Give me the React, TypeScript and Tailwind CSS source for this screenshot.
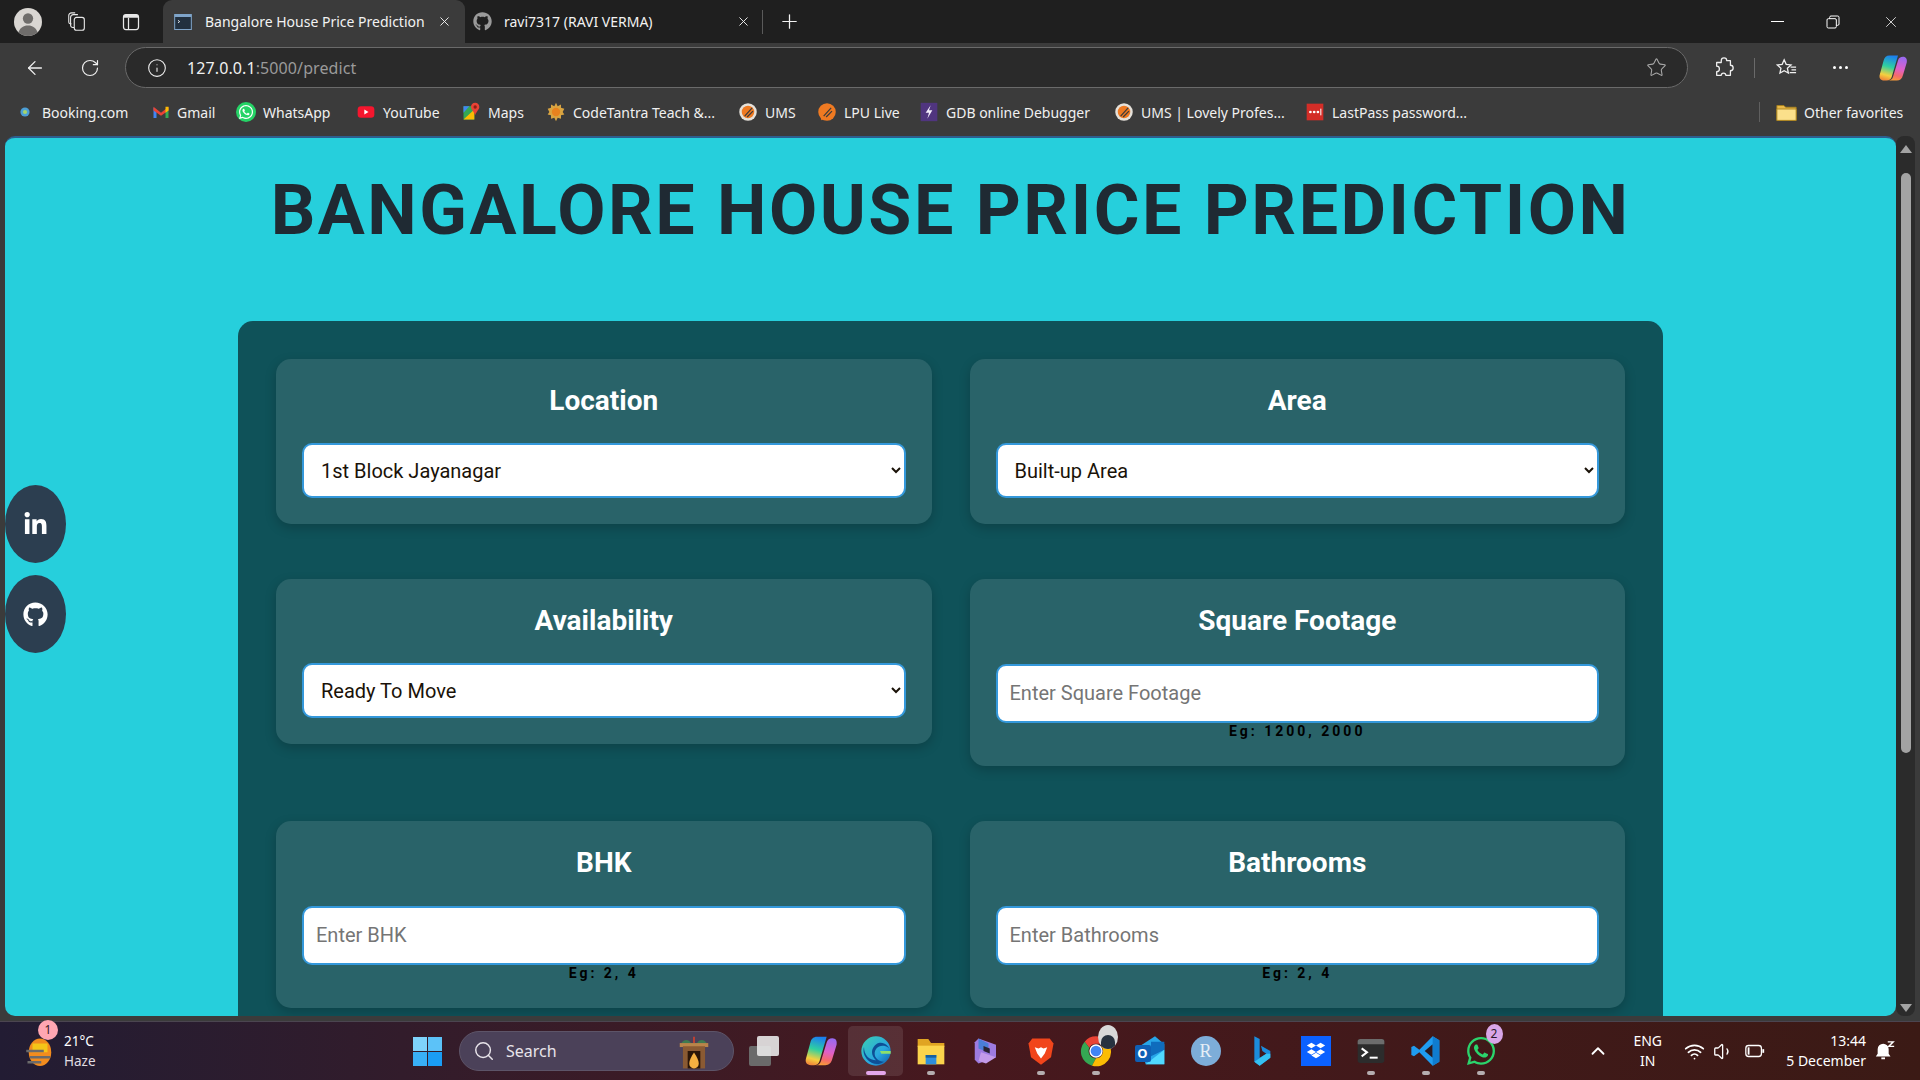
import { ArrowLeft, ChevronUp, Info, Plus, RotateCw, Search, Star, Volume1, Wifi, X } from "lucide-react";
import { FaGithub, FaLinkedinIn, FaWhatsapp } from "react-icons/fa";

const uiFont = "font-['Noto_Sans','Open_Sans',sans-serif]";

function Svg({ s = 18, vb = "0 0 24 24", children }: { s?: number; vb?: string; children: React.ReactNode }) {
  return (
    <svg width={s} height={s} viewBox={vb} className="shrink-0" aria-hidden="true">
      {children}
    </svg>
  );
}

function LpuIcon({ bubble }: { bubble?: boolean }) {
  return (
    <Svg s={20}>
      <circle cx="12" cy="12" r="10.5" fill={bubble ? "#ef7a22" : "#e5e1da"} />
      <circle cx="12" cy="12" r="7.5" fill="#ef7a22" />
      <path d="M8 17 17 7M11 18l7-7" stroke="#3b3b3b" strokeWidth="1.5" />
      {bubble && <path d="M5 17v5l5-2z" fill="#ef7a22" />}
    </Svg>
  );
}

function CopilotIcon({ s }: { s: number }) {
  return (
    <Svg s={s}>
      <path d="M9 2h7l-5 17c-.5 2-2 3-4 3H5c-3 0-4.500-2-3.500-5l3-11C5 3.500 7 2 9 2z" fill="url(#cp1)" />
      <path d="M15 22H8c2 0 3.500-1 4-3l4-13c.5-2 2-3 4-3 2.500 0 3.500 2 3 4.500l-3 10c-.7 3-2.500 4.500-5 4.500z" fill="url(#cp2)" />
    </Svg>
  );
}

const bookmarks = [
  {
    w: "w-[132px]",
    label: "Booking.com",
    gap: "gap-[12px]",
    icon: (
      <Svg s={10}>
        <circle cx="12" cy="12" r="11" fill="#4c9fd6" />
        <circle cx="12" cy="12" r="5" fill="#a6d66a" />
      </Svg>
    ),
  },
  {
    w: "w-[84px]",
    label: "Gmail",
    icon: (
      <Svg>
        <path d="M2 6v14h4V10z" fill="#4285f4" />
        <path d="M22 6v14h-4V10z" fill="#34a853" />
        <path d="m2 5 10 8 10-8v5l-10 7L2 10z" fill="#ea4335" />
        <path d="M18 5h4v5l-4 3z" fill="#fbbc04" />
      </Svg>
    ),
  },
  {
    w: "w-[120px]",
    label: "WhatsApp",
    icon: (
      <span className="flex h-[20px] w-[20px] items-center justify-center rounded-full bg-[#25d366]">
        <FaWhatsapp className="text-[16px] text-white" />
      </span>
    ),
  },
  {
    w: "w-[105px]",
    label: "YouTube",
    icon: (
      <Svg s={20}>
        <rect x="2" y="5" width="20" height="14" rx="4" fill="#f5162e" />
        <path d="m10 9 5 3-5 3z" fill="#fff" />
      </Svg>
    ),
  },
  {
    w: "w-[85px]",
    label: "Maps",
    icon: (
      <Svg s={20}>
        <path d="M3 5h13v16H3z" fill="#34a853" />
        <path d="M3 5h7L3 13z" fill="#4285f4" />
        <path d="m3 21 13-12v12z" fill="#fbbc04" />
        <path d="M17 1c-3 0-5 2-5 5 0 3 4 6 5 10 1-4 5-7 5-10 0-3-2-5-5-5z" fill="#ea4335" />
        <circle cx="17" cy="6" r="2" fill="#8d1f16" />
      </Svg>
    ),
  },
  {
    w: "w-[192px]",
    label: "CodeTantra Teach &...",
    icon: (
      <Svg s={20}>
        <path
          d="m12 1 2 4 4-2v4l4 1-2 4 2 3-4 1v4l-4-1-2 4-2-4-4 1v-4l-4-1 2-3-2-4 4-1V3l4 2z"
          fill="#d9a441"
        />
        <circle cx="12" cy="12" r="5" fill="#e8821e" />
      </Svg>
    ),
  },
  { w: "w-[79px]", label: "UMS", icon: <LpuIcon /> },
  { w: "w-[102px]", label: "LPU Live", icon: <LpuIcon bubble /> },
  {
    w: "w-[195px]",
    label: "GDB online Debugger",
    icon: (
      <Svg s={20}>
        <rect x="2" y="1" width="20" height="22" fill="#50357f" />
        <path d="m14 4-6 9h4l-2 7 6-10h-4z" fill="#f3eefc" />
      </Svg>
    ),
  },
  { w: "w-[191px]", label: "UMS | Lovely Profes...", icon: <LpuIcon /> },
  {
    w: "w-[160px]",
    label: "LastPass password...",
    icon: (
      <Svg s={20}>
        <rect x="2" y="2" width="20" height="20" fill="#d32d27" />
        <circle cx="6.5" cy="12" r="1.6" fill="#fff" />
        <circle cx="11" cy="12" r="1.6" fill="#fff" />
        <circle cx="15.5" cy="12" r="1.6" fill="#fff" />
        <path d="M19 8v8" stroke="#fff" strokeWidth="1.2" />
      </Svg>
    ),
  },
];

const cards = [
  { title: "Location", value: "1st Block Jayanagar" },
  { title: "Area", value: "Built-up Area" },
  { title: "Availability", value: "Ready To Move" },
  { title: "Square Footage", placeholder: "Enter Square Footage", hint: "Eg: 1200, 2000" },
  { title: "BHK", placeholder: "Enter BHK", hint: "Eg: 2, 4" },
  { title: "Bathrooms", placeholder: "Enter Bathrooms", hint: "Eg: 2, 4" },
];

function TabStrip() {
  return (
    <div className="flex h-[43px] items-center bg-[#1f1f1f] text-[14px] text-[#f2f2f2]">
      <div className="flex w-[163px] items-center">
        <span className="ml-[14px] flex h-[28px] w-[28px] items-center justify-center overflow-hidden rounded-full bg-[#d9d6d2]">
          <Svg s={28}>
            <circle cx="12" cy="9" r="4.4" fill="#6f6d6b" />
            <path d="M3 24c1-7 5-9 9-9s8 2 9 9z" fill="#6f6d6b" />
          </Svg>
        </span>
        <span className="ml-[24px]">
          <Svg s={22}>
            <g fill="none" stroke="#e8e8e8" strokeWidth="1.2">
              <rect x="9" y="7" width="11" height="14" rx="2.5" />
              <path d="M9 18H7.5A2.5 2.5 0 0 1 5 15.500V7a3 3 0 0 1 3-3h5M6 14H4.500A2 2 0 0 1 3 12V5a3 3 0 0 1 3-3h4" />
            </g>
          </Svg>
        </span>
        <span className="ml-[33px]">
          <Svg s={20}>
            <rect x="3" y="3" width="18" height="18" rx="3" fill="none" stroke="#e8e8e8" strokeWidth="1.5" />
            <path d="M3 7h18v-1a3 3 0 0 0-3-3H6a3 3 0 0 0-3 3z" fill="#e8e8e8" />
            <path d="M9 7v14" stroke="#e8e8e8" strokeWidth="1.5" />
          </Svg>
        </span>
      </div>

      <div className="flex h-full w-[302px] items-center rounded-t-[9px] bg-[#3b3b3b] pl-[10px]">
        <Svg s={20}>
          <rect x="2" y="3" width="20" height="18" fill="#22303f" stroke="#7fa4c9" strokeWidth="1.2" />
          <path d="M2 3h20v3H2z" fill="#7fa4c9" />
          <path d="m6 10 2 1.500L6 13" stroke="#fff" fill="none" />
        </Svg>
        <span className="ml-[12px] w-[232px] whitespace-nowrap">Bangalore House Price Prediction</span>
        <X size={15} strokeWidth={1.5} />
      </div>

      <div className="flex h-full w-[297px] items-center pl-[8px]">
        <FaGithub className="shrink-0 text-[19px] text-[#9a9a9a]" />
        <span className="ml-[12px] w-[232px] whitespace-nowrap">ravi7317 (RAVI VERMA)</span>
        <X size={15} strokeWidth={1.5} />
      </div>

      <span className="h-[24px] w-px bg-[#5a5a5a]" />
      <Plus size={23} strokeWidth={1.3} className="ml-[15px]" />

      <div className="ml-auto flex items-center gap-[41px] pr-[20px]">
        <span className="h-px w-[13px] bg-white" />
        <Svg s={16}>
          <g fill="none" stroke="#fff" strokeWidth="1.5">
            <rect x="3" y="7" width="14" height="14" rx="2" />
            <path d="M7 7V5a2 2 0 0 1 2-2h10a2 2 0 0 1 2 2v10a2 2 0 0 1-2 2h-2" />
          </g>
        </Svg>
        <X size={18} strokeWidth={1.1} />
      </div>
    </div>
  );
}

function Toolbar() {
  return (
    <div className="flex h-[49px] items-center bg-[#3b3b3b] text-[#f0f0f0]">
      <ArrowLeft size={22} strokeWidth={1.4} className="ml-[24px]" />
      <RotateCw size={20} strokeWidth={1.4} className="ml-[34px]" />
      <div className="ml-[25px] flex h-[41px] w-[1563px] items-center rounded-full border border-[#6a6a6a] bg-[#2a2a2a] pl-[21px] pr-[20px]">
        <Info size={20} strokeWidth={1.3} />
        <span className="ml-[20px] text-[16px] tracking-[0.1px]">
          127.0.0.1<span className="text-[#9a9a9a]">:5000/predict</span>
        </span>
        <Star size={21} strokeWidth={1.2} className="ml-auto text-[#a8a8a8]" />
      </div>
      <span className="ml-[25px]">
        <Svg s={22}>
          <path
            d="M9 4a3 3 0 0 1 6 0h4v5a3 3 0 0 1 0 6v5h-5a2.500 2.500 0 0 0-5 0H4v-4a3 3 0 0 0 0-6V6h5z"
            fill="none"
            stroke="#f0f0f0"
            strokeWidth="1.4"
            strokeLinejoin="round"
          />
        </Svg>
      </span>
      <span className="ml-[19px] h-[20px] w-px bg-[#6a6a6a]" />
      <span className="ml-[20px]">
        <Svg s={22}>
          <path
            d="m10 3 2.200 5 5.300.6-4 3.600 1.100 5.300L10 15l-4.600 2.500 1.100-5.300-4-3.600 5.300-.6z"
            fill="none"
            stroke="#f0f0f0"
            strokeWidth="1.4"
          />
          <path d="M17 11h6M18 14h5M16 17h7" stroke="#f0f0f0" strokeWidth="1.3" />
        </Svg>
      </span>
      <span className="ml-[36px] flex gap-[3px]">
        <span className="h-[3px] w-[3px] rounded-full bg-white" />
        <span className="h-[3px] w-[3px] rounded-full bg-white" />
        <span className="h-[3px] w-[3px] rounded-full bg-white" />
      </span>
      <span className="ml-[30px]">
        <Svg s={30}>
          <defs>
            <linearGradient id="cp1" x1="0.6" y1="0" x2="0.4" y2="1">
              <stop offset="0" stopColor="#1b7ff0" />
              <stop offset="0.45" stopColor="#2fd0a0" />
              <stop offset="0.8" stopColor="#f4d03f" />
              <stop offset="1" stopColor="#f08a3a" />
            </linearGradient>
            <linearGradient id="cp2" x1="0.6" y1="0" x2="0.4" y2="1">
              <stop offset="0" stopColor="#9a6af0" />
              <stop offset="0.5" stopColor="#e060c8" />
              <stop offset="0.8" stopColor="#f56a6a" />
              <stop offset="1" stopColor="#f59b3a" />
            </linearGradient>
          </defs>
          <path d="M9 2h7l-5 17c-.5 2-2 3-4 3H5c-3 0-4.500-2-3.500-5l3-11C5 3.500 7 2 9 2z" fill="url(#cp1)" />
          <path d="M15 22H8c2 0 3.500-1 4-3l4-13c.5-2 2-3 4-3 2.500 0 3.500 2 3 4.500l-3 10c-.7 3-2.500 4.500-5 4.500z" fill="url(#cp2)" />
        </Svg>
      </span>
    </div>
  );
}

function Bookmarks() {
  return (
    <div className="flex h-[44px] items-start bg-[#3b3b3b] pl-[20px] pt-[8px] text-[14px] text-[#f0f0f0]">
      {bookmarks.map((b) => (
        <div key={b.label} className={`flex h-[24px] items-center whitespace-nowrap ${b.gap ?? "gap-[7px]"} ${b.w}`}>
          {b.icon}
          <span>{b.label}</span>
        </div>
      ))}
      <span className="ml-[294px] mt-[2px] h-[20px] w-px bg-[#5f5f5f]" />
      <span className="ml-[16px] mt-[2px]">
        <Svg s={21}>
          <path d="M1 4h8l2 2h12v15H1z" fill="#e9b949" stroke="#a8801c" />
          <path d="M1 8h22v13H1z" fill="#fbe08b" stroke="#a8801c" />
        </Svg>
      </span>
      <span className="ml-[7px] flex h-[24px] items-center whitespace-nowrap">Other favorites</span>
    </div>
  );
}

function Card({ title, value, placeholder, hint }: (typeof cards)[number]) {
  return (
    <div className="rounded-[15px] bg-[#296369] px-[26px] pt-[24px] shadow-[0_4px_12px_rgba(0,0,0,0.2)]">
      <h2 className={`text-center text-[28px] font-bold leading-[36px] text-white ${value ? "mb-[24px]" : "mb-[25px]"}`}>{title}</h2>
      {value ? (
        <select className="mb-[26px] block h-[55px] w-full rounded-[10px] border-2 border-[#3498db] bg-white pl-[13px] pr-[9px] text-[20px] text-[#1a1208] outline-none">
          <option>{value}</option>
        </select>
      ) : (
        <>
          <input
            placeholder={placeholder}
            className="block h-[59px] w-full rounded-[10px] border-2 border-[#3498db] bg-white pl-[12px] pb-[2px] text-[20px] text-black outline-none placeholder:text-[#757575]"
          />
          <p className="pb-[26px] text-center text-[14px] font-bold leading-[17px] tracking-[3px] text-black">{hint}</p>
        </>
      )}
    </div>
  );
}

function Page() {
  return (
    <div className="relative h-full min-w-0 flex-1 overflow-hidden rounded-[10px] border-t-2 border-[#2d5f8f] bg-[#26cfdc] font-['Roboto',sans-serif]">
      <h1 className="pt-[29px] text-center text-[70px] font-bold leading-[86px] tracking-[2.5px] text-[#1f2a33]">
        BANGALORE HOUSE PRICE PREDICTION
      </h1>

      <div className="mx-auto mt-[68px] w-[1425px] rounded-[15px] bg-[#0f5259] p-[38px]">
        <div className="grid grid-cols-2 items-start gap-x-[38px] gap-y-[55px]">
          {cards.map((c) => (
            <Card key={c.title} {...c} />
          ))}
        </div>
      </div>

      {/* floating social links */}
      <div className="absolute left-0 top-[347px] flex flex-col gap-[12px]">
        <a className="flex h-[78px] w-[61px] items-center justify-center rounded-[50%] bg-[#2c3e50] text-[25px] text-white">
          <FaLinkedinIn />
        </a>
        <a className="flex h-[78px] w-[61px] items-center justify-center rounded-[50%] bg-[#2c3e50] text-[25px] text-white">
          <FaGithub />
        </a>
      </div>
    </div>
  );
}

function Scrollbar() {
  return (
    <div className="flex h-full w-[19px] flex-col items-center rounded-[8px] bg-[#2b2b2b]">
      <span className="mt-[9px] h-0 w-0 border-x-[6px] border-b-[8px] border-x-transparent border-b-[#a3a3a3]" />
      <span className="mt-[20px] h-[580px] w-[10px] rounded-full bg-[#a3a3a3]" />
      <span className="mt-auto mb-[4px] h-0 w-0 border-x-[6px] border-t-[8px] border-x-transparent border-t-[#a3a3a3]" />
    </div>
  );
}

const apps = [
  { k: "copilot", dot: false, icon: <CopilotIcon s={34} /> },
  {
    k: "edge",
    dot: true,
    active: true,
    icon: (
      <Svg s={32}>
        <defs>
          <linearGradient id="edge" x1="0" y1="0" x2="1" y2="1">
            <stop offset="0" stopColor="#3ad0b0" />
            <stop offset="0.6" stopColor="#2aa7e0" />
            <stop offset="1" stopColor="#0f5aa8" />
          </linearGradient>
        </defs>
        <circle cx="12" cy="12" r="11" fill="url(#edge)" />
        <path d="M23 13c0-3-3-5-6-5-4 0-6 3-6 6s3 6 7 6c-4 3-9 2-12-1-3-3-4-7-3-10 0 6 4 10 9 10-2-2-3-4-3-6 0-3 2-6 5-7 4-1 8 2 9 7z" fill="#0e4f96" />
        <path d="M15 12h8v2h-7z" fill="#8fe06a" />
      </Svg>
    ),
  },
  {
    k: "explorer",
    dot: true,
    icon: (
      <Svg s={32}>
        <path d="M2 3h8l2 3h10v3H2z" fill="#e0a422" />
        <path d="M2 8h20v14H2z" fill="#fbd44c" />
        <rect x="8" y="15" width="8" height="7" fill="#2f8fdc" />
        <rect x="8" y="15" width="8" height="2" fill="#155f9f" />
      </Svg>
    ),
  },
  {
    k: "copilot365",
    dot: false,
    icon: (
      <Svg s={30}>
        <path d="M6 2 20 7v10L6 22l-3-3V5z" fill="#9d7be0" />
        <path d="m6 2 8 4v7l-8-3z" fill="#4a7ed8" />
        <path d="m8 13 12 4-8 5-6-2z" fill="#c39ae8" />
        <path d="m10 8 5 2v4l-5-2z" fill="#2b2230" />
      </Svg>
    ),
  },
  {
    k: "brave",
    dot: true,
    icon: (
      <Svg s={30}>
        <path d="M5 2h14l3 4-2 11-8 6-8-6L2 6z" fill="#f1451b" />
        <path d="M7 9l3 1 2-1 2 1 3-1-2 5-3 4-3-4z" fill="#fff" />
      </Svg>
    ),
  },
  {
    k: "chrome",
    dot: true,
    icon: (
      <span className="relative flex">
        <Svg s={32}>
          <path d="M12 1a11 11 0 0 1 9.500 5.500H12a5.500 5.500 0 0 0-5 3L3.500 5A11 11 0 0 1 12 1z" fill="#ea4335" />
          <path d="M3.500 5 7 9.500a5.500 5.500 0 0 0 5 8L9 23A11 11 0 0 1 3.500 5z" fill="#34a853" />
          <path d="M21.500 6.500A11 11 0 0 1 9 23l3-5.500a5.500 5.500 0 0 0 4-9z" fill="#fbbc04" />
          <circle cx="12" cy="12" r="4.500" fill="#4285f4" stroke="#fff" />
        </Svg>
        <span className="absolute -right-[6px] -top-[10px] flex h-[24px] w-[20px] items-end justify-center overflow-hidden rounded-[50%] bg-[#d8d8d8]">
          <span className="h-[14px] w-[14px] rounded-t-full bg-[#27323f]" />
        </span>
      </span>
    ),
  },
  {
    k: "outlook",
    dot: false,
    icon: (
      <span className="relative flex">
        <Svg s={32}>
          <path d="M4 8 15 1l7 6v15H8z" fill="#27a5e8" />
          <path d="M12 5h10v6l-10 5z" fill="#0f6cbd" />
          <path d="M8 22 22 11v11z" fill="#50d9ff" />
        </Svg>
        <span className="absolute left-0 top-[10px] flex h-[17px] w-[16px] items-center justify-center rounded-[2px] bg-[#0f5fb5] text-[13px] font-bold leading-none text-white">
          O
        </span>
      </span>
    ),
  },
  {
    k: "r",
    dot: false,
    icon: (
      <span className="flex h-[30px] w-[30px] items-center justify-center rounded-full bg-[#7dadd9] font-['Liberation_Serif',serif] text-[18px] text-[#e6eef6]">
        R
      </span>
    ),
  },
  {
    k: "bing",
    dot: false,
    icon: (
      <Svg s={32}>
        <path d="M7 1l4 2v14l5-3-3-2-1-4 7 4v5L11 23l-4-3z" fill="#1b8cdc" />
        <path d="M7 20 16 14l3 0v3L11 23z" fill="#35c1f1" />
      </Svg>
    ),
  },
  {
    k: "dropbox",
    dot: false,
    icon: (
      <span className="flex h-[30px] w-[30px] items-center justify-center bg-[#0b61ff]">
        <Svg s={22}>
          <path d="m7 3 5 3-5 3-5-3zm10 0 5 3-5 3-5-3zM7 10l5 3-5 3-5-3zm10 0 5 3-5 3-5-3zM7 17l5-3 5 3-5 3z" fill="#fff" />
        </Svg>
      </span>
    ),
  },
  {
    k: "terminal",
    dot: true,
    icon: (
      <Svg s={32}>
        <rect x="2" y="3" width="20" height="18" rx="2" fill="#2c2c2c" />
        <path d="M2 5a2 2 0 0 1 2-2h16a2 2 0 0 1 2 2v2H2z" fill="#6c6c6c" />
        <path d="m5 10 4 3-4 3" stroke="#fff" strokeWidth="1.5" fill="none" />
        <path d="M11 17h6" stroke="#fff" strokeWidth="1.5" />
      </Svg>
    ),
  },
  {
    k: "vscode",
    dot: true,
    icon: (
      <Svg s={32}>
        <path d="M17 1 22 4v16l-5 3L7 13l-4 3-2-1v-6l2-1 4 3z" fill="#1f9cf0" />
        <path d="m17 7-6 5 6 5z" fill="#2b1a20" />
        <path d="M17 1 22 4v16l-5 3z" fill="#0f7ccf" />
      </Svg>
    ),
  },
  {
    k: "whatsapp",
    dot: true,
    icon: (
      <span className="relative flex">
        <FaWhatsapp className="text-[32px] text-[#2bd46c]" />
        <span className="absolute -right-[6px] -top-[11px] flex h-[20px] w-[17px] items-center justify-center rounded-[50%] bg-[#d9a6e8] text-[12px] text-[#2a1a2a]">
          2
        </span>
      </span>
    ),
  },
];

function Taskbar() {
  return (
    <div className={`flex h-[59px] items-center border-t border-[#4b4550] bg-gradient-to-r from-[#221c33] via-[#47181e] to-[#3b1a15] text-white ${uiFont}`}>
      {/* weather */}
      <div className="relative ml-[25px] flex w-[82px] items-center">
        <Svg s={30}>
          <ellipse cx="12" cy="13" rx="9" ry="11" fill="#f28c1e" />
          <path d="M6 6h12v7H6z" fill="#f5c518" />
          <path d="M1 12h14M4 17h16M2 21h11" stroke="#6b6b6b" strokeWidth="2" />
        </Svg>
        <span className="absolute left-[13px] -top-[11px] flex h-[20px] w-[20px] items-center justify-center rounded-full bg-[#ffa6b2] text-[12px] text-[#3a1a20]">
          1
        </span>
        <div className="ml-[9px] text-[13.5px] leading-[20px]">
          <div>21°C</div>
          <div className="text-[#e0dce2]">Haze</div>
        </div>
      </div>

      {/* start */}
      <div className="ml-[306px] grid grid-cols-2 gap-[1px]">
        <span className="h-[14px] w-[14px] bg-[#7fd3fb]" />
        <span className="h-[14px] w-[14px] bg-[#5cc2f8]" />
        <span className="h-[14px] w-[14px] bg-[#39b0f7]" />
        <span className="h-[14px] w-[14px] bg-[#1a9df5]" />
      </div>

      {/* search */}
      <div className="ml-[17px] flex h-[40px] w-[275px] items-center rounded-full border border-[#5d5468] bg-[#4b4159] pl-[13px] pr-[20px] text-[16px] text-[#e8e4ea]">
        <Search size={22} strokeWidth={1.6} />
        <span className="ml-[11px]">Search</span>
        <span className="ml-auto">
          <Svg s={38} vb="0 0 24 24">
            <path d="M4 7c2-3 5-2 6 0h4c1-2 4-3 6 0l-3 3H7z" fill="#3f7a50" />
            <rect x="3" y="7" width="18" height="2.500" fill="#b9844a" />
            <rect x="5" y="9" width="14" height="14" fill="#8a5a33" />
            <rect x="8" y="12" width="8" height="11" fill="#2a1508" />
            <path d="M12 13c2 3 3 5 3 7a3 3 0 0 1-6 0c0-2 1-4 3-7z" fill="#f5b041" />
            <path d="M11.500 3h1v4h-1z" fill="#d9412b" />
          </Svg>
        </span>
      </div>

      {/* task view */}
      <div className="relative ml-[15px] h-[30px] w-[30px]">
        <span className="absolute bottom-0 left-0 h-[20px] w-[22px] rounded-[2px] bg-[#6a6a6a]" />
        <span className="absolute right-0 top-0 h-[20px] w-[22px] rounded-[2px] bg-[#e8e8e8]/90" />
      </div>

      {/* pinned apps */}
      <div className="ml-[14px] flex">
        {apps.map((a) => (
          <div
            key={a.k}
            className={`relative flex h-[50px] w-[55px] items-center justify-center rounded-[5px] ${a.active ? "bg-white/10" : ""}`}
          >
            {a.icon}
            {a.dot && (
              <span
                className={`absolute bottom-[1px] h-[4px] rounded-full ${a.active ? "w-[20px] bg-[#e3a6ea]" : "w-[8px] bg-[#b5aeb0]"}`}
              />
            )}
          </div>
        ))}
      </div>

      {/* tray */}
      <div className="ml-auto flex items-center pr-[24px] text-[13.5px]">
        <ChevronUp size={22} strokeWidth={2} />
        <div className="ml-[24px] text-center text-[14px] leading-[20px]">
          <div>ENG</div>
          <div>IN</div>
        </div>
        <Wifi size={21} strokeWidth={2} className="ml-[22px]" />
        <Volume1 size={21} strokeWidth={1.5} className="ml-[8px]" />
        <span className="ml-[10px]">
          <Svg s={22}>
            <rect x="2" y="6" width="17" height="12" rx="3" fill="none" stroke="#fff" strokeWidth="1.4" />
            <rect x="4" y="8" width="2" height="8" fill="#fff" />
            <path d="M20 10h2v4h-2z" fill="#fff" />
          </Svg>
        </span>
        <div className="ml-[14px] w-[86px] whitespace-nowrap text-right text-[14px] leading-[20px]">
          <div>13:44</div>
          <div>5 December</div>
        </div>
        <span className="ml-[8px]">
          <Svg s={22}>
            <path d="M10 4a6 6 0 0 1 6 6v5l2 3H2l2-3v-5a6 6 0 0 1 6-6z" fill="#fff" />
            <path d="M8 19h4v2H8z" fill="#fff" />
            <path d="M15 2h6l-5 5h6" stroke="#fff" strokeWidth="1.5" fill="none" />
          </Svg>
        </span>
      </div>
    </div>
  );
}

export default function App() {
  return (
    <div className="flex h-screen w-full flex-col overflow-hidden bg-[#3b3b3b]">
      <div className={uiFont}>
        <TabStrip />
        <Toolbar />
        <Bookmarks />
      </div>

      <div className="flex min-h-0 flex-1 pl-[5px] pr-[5px] pb-[5px]">
        <Page />
        <Scrollbar />
      </div>

      <Taskbar />
    </div>
  );
}
